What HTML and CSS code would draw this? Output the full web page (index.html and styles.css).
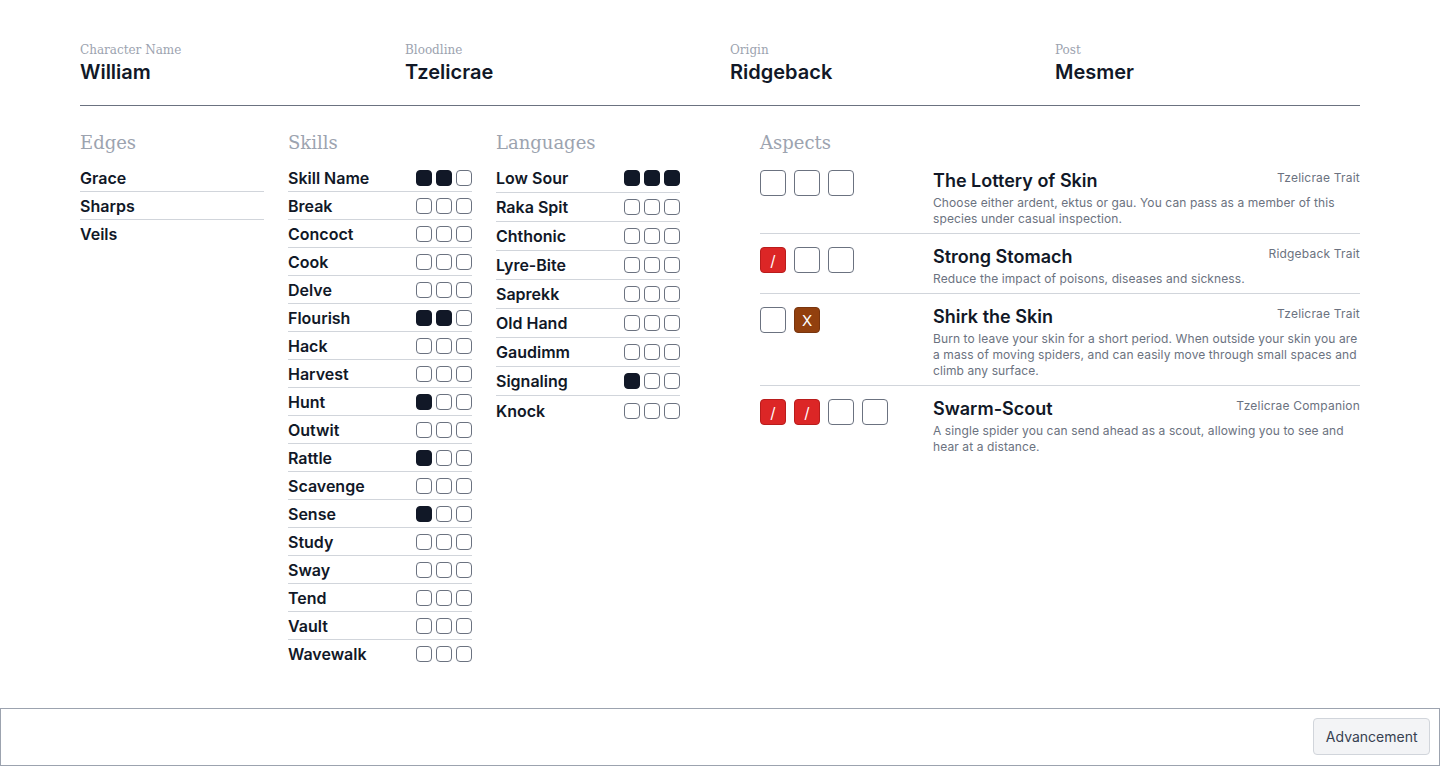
FILE: index.html
```html
<!DOCTYPE html>
<html lang="en">
<head>
<meta charset="utf-8">
<title>Character Sheet</title>
<link rel="stylesheet" href="styles.css">
</head>
<body>
<main class="sheet">
  <header class="info">
    <div class="field"><div class="label">Character Name</div><div class="value">William</div></div>
    <div class="field"><div class="label">Bloodline</div><div class="value">Tzelicrae</div></div>
    <div class="field"><div class="label">Origin</div><div class="value">Ridgeback</div></div>
    <div class="field"><div class="label">Post</div><div class="value">Mesmer</div></div>
  </header>

  <div class="body">
    <div class="lists">
      <section class="list">
        <h2>Edges</h2>
        <div class="row"><span>Grace</span></div>
        <div class="row"><span>Sharps</span></div>
        <div class="row nb"><span>Veils</span></div>
      </section>

      <section class="list skills">
        <h2>Skills</h2>
        <div class="row"><span>Skill Name</span><span class="dots"><i class="on"></i><i class="on"></i><i></i></span></div>
        <div class="row"><span>Break</span><span class="dots"><i></i><i></i><i></i></span></div>
        <div class="row"><span>Concoct</span><span class="dots"><i></i><i></i><i></i></span></div>
        <div class="row"><span>Cook</span><span class="dots"><i></i><i></i><i></i></span></div>
        <div class="row"><span>Delve</span><span class="dots"><i></i><i></i><i></i></span></div>
        <div class="row"><span>Flourish</span><span class="dots"><i class="on"></i><i class="on"></i><i></i></span></div>
        <div class="row"><span>Hack</span><span class="dots"><i></i><i></i><i></i></span></div>
        <div class="row"><span>Harvest</span><span class="dots"><i></i><i></i><i></i></span></div>
        <div class="row"><span>Hunt</span><span class="dots"><i class="on"></i><i></i><i></i></span></div>
        <div class="row"><span>Outwit</span><span class="dots"><i></i><i></i><i></i></span></div>
        <div class="row"><span>Rattle</span><span class="dots"><i class="on"></i><i></i><i></i></span></div>
        <div class="row"><span>Scavenge</span><span class="dots"><i></i><i></i><i></i></span></div>
        <div class="row"><span>Sense</span><span class="dots"><i class="on"></i><i></i><i></i></span></div>
        <div class="row"><span>Study</span><span class="dots"><i></i><i></i><i></i></span></div>
        <div class="row"><span>Sway</span><span class="dots"><i></i><i></i><i></i></span></div>
        <div class="row"><span>Tend</span><span class="dots"><i></i><i></i><i></i></span></div>
        <div class="row"><span>Vault</span><span class="dots"><i></i><i></i><i></i></span></div>
        <div class="row nb"><span>Wavewalk</span><span class="dots"><i></i><i></i><i></i></span></div>
      </section>

      <section class="list langs">
        <h2>Languages</h2>
        <div class="row"><span>Low Sour</span><span class="dots"><i class="on"></i><i class="on"></i><i class="on"></i></span></div>
        <div class="row"><span>Raka Spit</span><span class="dots"><i></i><i></i><i></i></span></div>
        <div class="row"><span>Chthonic</span><span class="dots"><i></i><i></i><i></i></span></div>
        <div class="row"><span>Lyre-Bite</span><span class="dots"><i></i><i></i><i></i></span></div>
        <div class="row"><span>Saprekk</span><span class="dots"><i></i><i></i><i></i></span></div>
        <div class="row"><span>Old Hand</span><span class="dots"><i></i><i></i><i></i></span></div>
        <div class="row"><span>Gaudimm</span><span class="dots"><i></i><i></i><i></i></span></div>
        <div class="row"><span>Signaling</span><span class="dots"><i class="on"></i><i></i><i></i></span></div>
        <div class="row nb"><span>Knock</span><span class="dots"><i></i><i></i><i></i></span></div>
      </section>
    </div>

    <section class="aspects">
      <h2>Aspects</h2>
      <div class="aspect">
        <div class="boxes"><b></b><b></b><b></b></div>
        <div class="text">
          <div class="top"><span class="title">The Lottery of Skin</span><span class="tag">Tzelicrae Trait</span></div>
          <p>Choose either ardent, ektus or gau. You can pass as a member of this species under casual inspection.</p>
        </div>
      </div>
      <div class="aspect">
        <div class="boxes"><b class="hurt">/</b><b></b><b></b></div>
        <div class="text">
          <div class="top"><span class="title">Strong Stomach</span><span class="tag">Ridgeback Trait</span></div>
          <p>Reduce the impact of poisons, diseases and sickness.</p>
        </div>
      </div>
      <div class="aspect">
        <div class="boxes"><b></b><b class="burnt">X</b></div>
        <div class="text">
          <div class="top"><span class="title">Shirk the Skin</span><span class="tag">Tzelicrae Trait</span></div>
          <p>Burn to leave your skin for a short period. When outside your skin you are a mass of moving spiders, and can easily move through small spaces and climb any surface.</p>
        </div>
      </div>
      <div class="aspect last">
        <div class="boxes"><b class="hurt">/</b><b class="hurt">/</b><b></b><b></b></div>
        <div class="text">
          <div class="top"><span class="title">Swarm-Scout</span><span class="tag">Tzelicrae Companion</span></div>
          <p>A single spider you can send ahead as a scout, allowing you to see and hear at a distance.</p>
        </div>
      </div>
    </section>
  </div>
</main>

<footer class="bar">
  <button class="btn" type="button">Advancement</button>
</footer>
</body>
</html>
```

FILE: styles.css
```css
* { box-sizing: border-box; }

html, body { height: 100%; }

body {
  margin: 0;
  background: #ffffff;
  color: #111827;
  font-family: "Inter", "Noto Sans", sans-serif;
  display: flex;
  flex-direction: column;
  min-height: 100vh;
}

.sheet {
  flex: 1;
  padding: 42px 80px 0;
}

.info {
  display: grid;
  grid-template-columns: repeat(4, 1fr);
  column-gap: 20px;
  padding-bottom: 19px;
  border-bottom: 1px solid #6b7280;
}

.label {
  font-family: "DejaVu Serif", serif;
  font-size: 12px;
  line-height: 16px;
  color: #9ca3af;
}

.value {
  font-size: 20px;
  line-height: 28px;
  font-weight: 600;
  color: #111827;
}

.body {
  display: grid;
  grid-template-columns: 600px 600px;
  column-gap: 80px;
  padding-top: 23px;
}

.lists {
  display: grid;
  grid-template-columns: repeat(3, 1fr);
  column-gap: 24px;
  align-items: start;
}

h2 {
  margin: 0 0 7px;
  font-family: "DejaVu Serif", serif;
  font-weight: 400;
  font-size: 18px;
  line-height: 28px;
  color: #9ca3af;
}

.row {
  display: flex;
  justify-content: space-between;
  align-items: center;
  height: 28px;
  border-bottom: 1px solid #d1d5db;
  font-size: 16px;
  font-weight: 600;
  color: #111827;
}

.langs .row { height: 29px; }

.row.nb { border-bottom: none; }

.dots {
  display: flex;
  gap: 4px;
}

.dots i {
  display: block;
  width: 16px;
  height: 16px;
  border: 1.5px solid #6b7280;
  border-radius: 4px;
}

.dots i.on {
  background: #111827;
  border-color: #111827;
}

.aspect {
  display: grid;
  grid-template-columns: 173px 1fr;
  padding: 9px 0 6px;
  border-bottom: 1px solid #d1d5db;
}

.aspect:first-of-type { padding-top: 3px; }

.aspect.last { border-bottom: none; }

.boxes {
  display: flex;
  gap: 8px;
  padding-top: 4px;
}

.aspect:first-of-type .boxes { padding-top: 3px; }

.boxes b {
  display: flex;
  align-items: center;
  justify-content: center;
  width: 26px;
  height: 26px;
  border: 1.5px solid #6b7280;
  border-radius: 4px;
  font-weight: 400;
  font-size: 15px;
  color: #ffffff;
}

.boxes b.hurt {
  background: #dc2626;
  border-color: #b91c1c;
}

.boxes b.burnt {
  background: #92400e;
  border-color: #78350f;
}

.top {
  display: flex;
  justify-content: space-between;
  align-items: flex-start;
}

.title {
  font-size: 18px;
  line-height: 28px;
  font-weight: 600;
  color: #111827;
}

.tag {
  font-size: 12px;
  line-height: 22px;
  color: #6b7280;
  letter-spacing: 0.2px;
}

.text p {
  margin: 0;
  font-size: 12px;
  line-height: 16px;
  color: #6b7280;
  letter-spacing: 0.1px;
}

.bar {
  display: flex;
  justify-content: flex-end;
  height: 58px;
  padding: 9px 9px 10px;
  border: 1px solid #9ca3af;
}

.btn {
  height: 37px;
  padding: 0 11.5px;
  background: #f3f4f6;
  border: 1px solid #d1d5db;
  border-radius: 4px;
  font-family: "Inter", sans-serif;
  font-size: 14px;
  color: #374151;
}
```
